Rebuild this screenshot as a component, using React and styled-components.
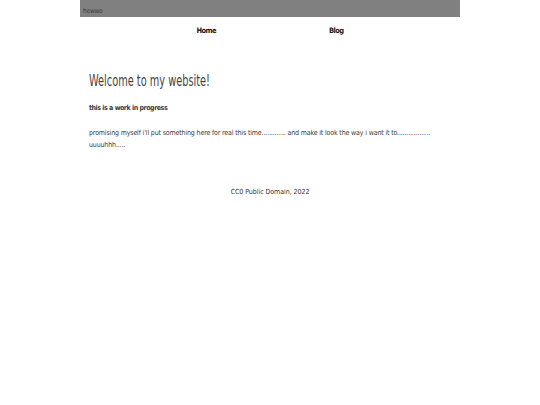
import styled, { createGlobalStyle } from "styled-components";

const GlobalStyle = createGlobalStyle`
  html, body {
    margin: 0;
    padding: 0;
    background: #ffffff;
  }
  body {
    font-family: "DejaVu Sans Condensed", "Liberation Sans", sans-serif;
    color: #333;
  }
`;

const Page = styled.div`
  width: 380px;
  margin: 0 auto;
`;

const TopBar = styled.header`
  height: 17px;
  background: #808080;
  display: flex;
  align-items: flex-end;
  padding: 0 3px 2px;
  box-sizing: border-box;
  font-size: 6.5px;
  letter-spacing: -0.2px;
  color: #3a3a3a;
`;

const Nav = styled.nav`
  display: flex;
  justify-content: center;
  gap: 113px;
  padding-top: 9px;
  height: 18px;

  & a {
    font-size: 7.5px;
    font-weight: 700;
    letter-spacing: -0.6px;
    color: #1a1a1a;
    text-decoration: none;
  }
`;

const Main = styled.main`
  padding: 27px 9px 0;
  color: #3a3a3a;

  & h1 {
    margin: 0;
    font-size: 16px;
    font-weight: 400;
    color: #444;
    transform: scaleX(0.68);
    transform-origin: left center;
    white-space: nowrap;
  }

  & h2 {
    margin: 14px 0 0;
    font-size: 7px;
    font-weight: 700;
    letter-spacing: -0.45px;
  }

  & p {
    margin: 15px 0 0;
    font-size: 7px;
    line-height: 12px;
    letter-spacing: -0.15px;
  }
`;

const Footer = styled.footer`
  text-align: center;
  font-size: 7px;
  letter-spacing: -0.05px;
  color: #333;
  margin-top: 37px;
`;

export default function App() {
  return (
    <>
      <GlobalStyle />
      <Page>
        <TopBar>hewwo</TopBar>
        <Nav>
          <a href="#">Home</a>
          <a href="#">Blog</a>
        </Nav>
        <Main>
          <h1>Welcome to my website!</h1>
          <h2>this is a work in progress</h2>
          <p>
            promising myself i'll put something here for real this time.............
            and make it look the way i want it to..................
            uuuuhhh.....
          </p>
        </Main>
        <Footer>CC0 Public Domain, 2022</Footer>
      </Page>
    </>
  );
}
